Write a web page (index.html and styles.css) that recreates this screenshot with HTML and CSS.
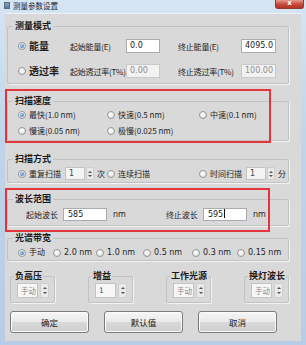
FILE: index.html
```html
<!DOCTYPE html>
<html lang="zh">
<head>
    <meta charset="UTF-8">
    <title>测量参数设置</title>
    <link rel="stylesheet" href="styles.css">
</head>
<body>
    <div class="window">
        <!-- Titelleiste -->
        <div class="titlebar">
            <span class="app-icon"></span>
            <span class="title">测量参数设置</span>
            <span class="close">x</span>
        </div>

        <div class="client">
            <!-- 测量模式 -->
            <fieldset class="group g-mode">
                <legend>测量模式</legend>
                <div class="mode-grid">
                    <label class="radio big"><span class="dot on"></span>能量</label>
                    <span class="lbl">起始能量(E)</span>
                    <span class="edit">0.0</span>
                    <span class="lbl lbl-right">终止能量(E)</span>
                    <span class="edit">4095.0</span>

                    <label class="radio big"><span class="dot"></span>透过率</label>
                    <span class="lbl">起始透过率(T%)</span>
                    <span class="edit off">0.00</span>
                    <span class="lbl lbl-right">终止透过率(T%)</span>
                    <span class="edit off">100.00</span>
                </div>
            </fieldset>

            <!-- 扫描速度 -->
            <fieldset class="group g-speed">
                <legend>扫描速度</legend>
                <div class="three-cols">
                    <label class="radio"><span class="dot on"></span>最快(1.0 nm)</label>
                    <label class="radio"><span class="dot"></span>快速(0.5 nm)</label>
                    <label class="radio"><span class="dot"></span>中速(0.1 nm)</label>
                    <label class="radio"><span class="dot"></span>慢速(0.05 nm)</label>
                    <label class="radio"><span class="dot"></span>极慢(0.025 nm)</label>
                </div>
            </fieldset>

            <!-- 扫描方式 -->
            <fieldset class="group g-scan">
                <legend>扫描方式</legend>
                <div class="three-cols">
                    <div class="cell">
                        <label class="radio"><span class="dot on"></span>重复扫描</label>
                        <span class="spin scan-spin"><span class="spin-text">1</span><span class="spin-btns"><i class="up"></i><i class="down"></i></span></span>
                        <span class="unit">次</span>
                    </div>
                    <div class="cell">
                        <label class="radio"><span class="dot"></span>连续扫描</label>
                    </div>
                    <div class="cell">
                        <label class="radio"><span class="dot"></span>时间扫描</label>
                        <span class="spin scan-spin"><span class="spin-text">1</span><span class="spin-btns"><i class="up"></i><i class="down"></i></span></span>
                        <span class="unit">分</span>
                    </div>
                </div>
            </fieldset>

            <!-- 波长范围 -->
            <fieldset class="group g-wave">
                <legend>波长范围</legend>
                <div class="wave-row">
                    <span class="wlbl">起始波长</span>
                    <span class="edit wedit">585</span>
                    <span class="nm">nm</span>
                    <span class="wlbl second">终止波长</span>
                    <span class="edit wedit">595<span class="caret"></span></span>
                    <span class="nm">nm</span>
                </div>
            </fieldset>

            <!-- 光谱带宽 -->
            <fieldset class="group g-band">
                <legend>光谱带宽</legend>
                <div class="band-row">
                    <label class="radio"><span class="dot on"></span>手动</label>
                    <label class="radio"><span class="dot"></span>2.0 nm</label>
                    <label class="radio"><span class="dot"></span>1.0 nm</label>
                    <label class="radio"><span class="dot"></span>0.5 nm</label>
                    <label class="radio"><span class="dot"></span>0.3 nm</label>
                    <label class="radio"><span class="dot"></span>0.15 nm</label>
                </div>
            </fieldset>

            <!-- kleine Gruppen -->
            <div class="small-row">
                <fieldset class="group small">
                    <legend>负高压</legend>
                    <span class="spin big-spin"><span class="spin-text off">手动</span><span class="spin-btns"><i class="up"></i><i class="down"></i></span></span>
                </fieldset>
                <fieldset class="group small">
                    <legend>增益</legend>
                    <span class="spin big-spin"><span class="spin-text">1</span><span class="spin-btns"><i class="up"></i><i class="down"></i></span></span>
                </fieldset>
                <fieldset class="group small">
                    <legend>工作光源</legend>
                    <span class="spin big-spin"><span class="spin-text off">手动</span><span class="spin-btns"><i class="up"></i><i class="down"></i></span></span>
                </fieldset>
                <fieldset class="group small">
                    <legend>换灯波长</legend>
                    <span class="spin big-spin"><span class="spin-text off">手动</span><span class="spin-btns"><i class="up"></i><i class="down"></i></span></span>
                </fieldset>
            </div>

            <!-- Buttons -->
            <div class="buttons">
                <button>确定</button>
                <button>默认值</button>
                <button>取消</button>
            </div>

            <!-- rote Markierungen -->
            <div class="mark mark-speed"></div>
            <div class="mark mark-wave"></div>
        </div>
    </div>
</body>
</html>
```

FILE: styles.css
```css
* {
    margin: 0;
    padding: 0;
    box-sizing: border-box;
}

body {
    width: 306px;
    height: 345px;
    overflow: hidden;
    font-family: "Noto Sans CJK SC", "DejaVu Sans", sans-serif;
    font-size: 8px;
    color: #1f1f1f;
    background: #c4d7eb;
}

.window {
    width: 306px;
    height: 345px;
    display: flex;
    flex-direction: column;
    padding: 0 5px 4px 5px;
    background: linear-gradient(#d6e5f4, #c0d5ea 40%, #b6cde5);
}

/* Titelleiste */
.titlebar {
    height: 13px;
    display: flex;
    align-items: flex-start;
}

.app-icon {
    width: 6px;
    height: 7px;
    margin: 2px 3px 0 -1px;
    background: linear-gradient(#8aa3bf, #5e7694);
    border: 1px solid #566b86;
}

.title {
    font-size: 7.5px;
    line-height: 11px;
    color: #1c2430;
}

.close {
    margin-left: auto;
    margin-right: -3px;
    width: 29px;
    height: 9px;
    border: 1px solid #8c3a32;
    border-top: none;
    border-radius: 0 0 3px 3px;
    background: linear-gradient(#e59a8c, #c7473a 55%, #b13427);
    color: #fff;
    font-family: "DejaVu Sans", sans-serif;
    font-weight: bold;
    font-size: 7px;
    line-height: 7px;
    text-align: center;
}

.client {
    flex: 1;
    position: relative;
    padding: 7px 12px 0 2px;
    background: #d9d9d9;
    border-top: 1px solid #eef2f6;
}

/* Gruppen */
.group {
    min-width: 0;
    border: 1px solid #c2c2c2;
    border-radius: 2px;
    box-shadow: 1px 1px 0 #f3f3f3;
    padding: 0 6px 0 10px;
}

.group legend {
    font-size: 9px;
    font-weight: bold;
    line-height: 10px;
    padding: 0 2px;
    margin-left: -5px;
    color: #1a1a1a;
}

.g-mode { padding-top: 8px; padding-bottom: 5px; }
.g-speed { margin-top: 12px; padding-top: 3px; padding-bottom: 3px; }
.g-scan { margin-top: 13px; padding-top: 3px; padding-bottom: 2px; }
.g-wave { margin-top: 11px; padding-top: 4px; padding-bottom: 4px; }
.g-band { margin-top: 7px; padding-top: 4px; padding-bottom: 1px; }

/* Radios */
.radio {
    display: flex;
    align-items: center;
    white-space: nowrap;
    line-height: 12px;
}

.dot {
    width: 8px;
    height: 8px;
    margin-right: 3px;
    border-radius: 50%;
    border: 1px solid #969696;
    background: radial-gradient(circle at 40% 35%, #ffffff, #dcdcdc);
    display: flex;
    align-items: center;
    justify-content: center;
    flex-shrink: 0;
}

.dot.on::after {
    content: "";
    width: 4px;
    height: 4px;
    border-radius: 50%;
    background: radial-gradient(circle at 40% 35%, #9cc8f0, #2c6fbf);
}

.radio.big {
    font-size: 10px;
    font-weight: bold;
}

/* Eingabefelder */
.edit {
    display: block;
    height: 14px;
    line-height: 12px;
    padding-left: 3px;
    background: #fff;
    border: 1px solid #a9abb0;
    font-family: "DejaVu Sans", sans-serif;
    font-size: 8px;
    color: #222;
}

.edit.off {
    background: #f2f2f2;
    border-color: #c9c9c9;
    color: #8c8c8c;
}

.mode-grid {
    display: grid;
    grid-template-columns: 52px 56px 34px 81px 35px;
    grid-template-rows: 14px 14px;
    row-gap: 11px;
    align-items: center;
}

.lbl {
    white-space: nowrap;
    letter-spacing: -0.2px;
}

.lbl-right {
    padding-left: 18px;
}

.three-cols {
    display: grid;
    grid-template-columns: 89px 92px auto;
    row-gap: 4px;
}

/* Spinbox */
.cell {
    display: flex;
    align-items: center;
    height: 13px;
}

.spin {
    display: flex;
    height: 13px;
}

.spin-text {
    display: block;
    padding-left: 3px;
    background: #f4f4f4;
    border: 1px solid #c3c3c3;
    line-height: 11px;
    font-family: "DejaVu Sans", sans-serif;
    font-size: 8px;
    color: #444;
}

.spin-text.off {
    font-family: "Noto Sans CJK SC", sans-serif;
    color: #8a8a8a;
}

.spin-btns {
    width: 8px;
    margin-left: 1px;
    display: flex;
    flex-direction: column;
    justify-content: center;
    align-items: center;
    gap: 2px;
    background: #e9e9e9;
    border: 1px solid #cfcfcf;
}

.spin-btns i {
    width: 0;
    height: 0;
    border-left: 2px solid transparent;
    border-right: 2px solid transparent;
}

.spin-btns .up { border-bottom: 2px solid #555; }
.spin-btns .down { border-top: 2px solid #555; }

.scan-spin {
    margin-left: 4px;
}

.scan-spin .spin-text {
    width: 20px;
}

.unit {
    margin-left: 3px;
}

/* Wellenlaenge */
.wave-row {
    display: flex;
    align-items: center;
    height: 13px;
}

.wlbl {
    margin-left: 8px;
    width: 34px;
}

.wlbl.second {
    margin-left: 40px;
}

.wedit {
    width: 44px;
    height: 13px;
    margin-left: 3px;
    padding-left: 4px;
}

.caret {
    display: inline-block;
    width: 1px;
    height: 9px;
    margin-left: 1px;
    vertical-align: -1px;
    background: #111;
}

.nm {
    margin-left: 6px;
    font-family: "DejaVu Sans", sans-serif;
}

.band-row {
    display: grid;
    grid-template-columns: 35px 43px 47px 49px 45px auto;
}

.band-row .radio {
    font-family: "DejaVu Sans", "Noto Sans CJK SC", sans-serif;
}

/* kleine Gruppen */
.small-row {
    margin-top: 10px;
    padding-left: 3px;
    display: flex;
    justify-content: space-between;
}

.small {
    width: 45px;
    padding: 2px 0 4px 6px;
}

.small legend {
    margin-left: -3px;
    padding: 0 1px;
}

.big-spin {
    height: 15px;
}

.big-spin .spin-text {
    width: 21px;
    line-height: 13px;
    font-size: 7.5px;
    background: #f7f7f7;
}

.big-spin .spin-btns {
    width: 9px;
    margin-left: 2px;
    gap: 3px;
}

/* Buttons */
.buttons {
    margin-top: 8px;
    padding-left: 3px;
    display: flex;
    gap: 15px;
}

.buttons button {
    width: 79px;
    height: 22px;
    border: 1px solid #7b7b7b;
    border-radius: 3px;
    background: linear-gradient(#f6f6f6, #e9e9e9 50%, #d9d9d9 51%, #cfcfcf);
    box-shadow: inset 0 0 0 1px #fbfbfb;
    font-family: "Noto Sans CJK SC", sans-serif;
    font-size: 8.5px;
    color: #1a1a1a;
}

/* rote Markierungen */
.mark {
    position: absolute;
    border: 2px solid #e3353b;
}

.mark-speed {
    left: 0;
    top: 75px;
    width: 266px;
    height: 54px;
}

.mark-wave {
    left: 0;
    top: 174px;
    width: 265px;
    height: 44px;
}
```
